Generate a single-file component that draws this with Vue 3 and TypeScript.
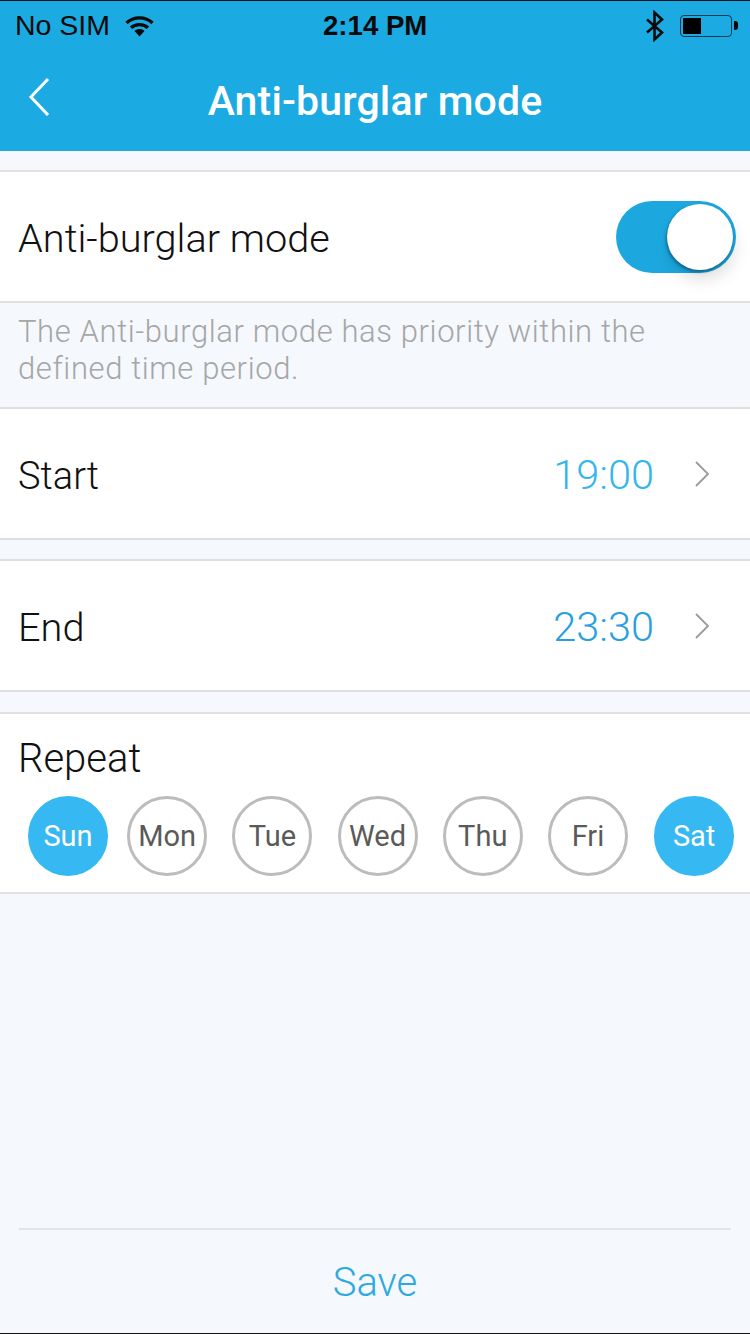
<script setup lang="ts">
interface Day {
  label: string;
  on: boolean;
}

const days: Day[] = [
  { label: 'Sun', on: true },
  { label: 'Mon', on: false },
  { label: 'Tue', on: false },
  { label: 'Wed', on: false },
  { label: 'Thu', on: false },
  { label: 'Fri', on: false },
  { label: 'Sat', on: true },
];
</script>

<template>
  <div class="page">
    <header class="top">
      <div class="status">
        <div class="status-left">
          <span>No SIM</span>
          <svg class="wifi" width="29" height="22" viewBox="0 0 29 22">
            <path d="M1.5 8C8.5 1.2 20.5 1.2 27.5 8" fill="none" stroke="#0a0a0a" stroke-width="3.4" />
            <path d="M6 12.8C10.5 8.6 18.5 8.6 23 12.8" fill="none" stroke="#0a0a0a" stroke-width="3.4" />
            <path d="M9.5 16 14.5 21.5 19.5 16C16.5 13.4 12.5 13.4 9.5 16Z" fill="#0a0a0a" />
          </svg>
        </div>
        <span class="clock">2:14 PM</span>
        <div class="status-right">
          <svg width="20" height="32" viewBox="0 0 20 32">
            <path d="M2 9.5 17 22.5 9.5 29.5V2.5L17 9.5 2 22.5" fill="none" stroke="#0a0a0a" stroke-width="2.6" />
          </svg>
          <div class="battery"><div class="battery-fill"></div></div>
        </div>
      </div>
      <div class="nav">
        <svg class="back" width="24" height="38" viewBox="0 0 24 38">
          <path d="M21 1 4 19 21 37" fill="none" stroke="#fff" stroke-width="3" />
        </svg>
        <h1>Anti-burglar mode</h1>
      </div>
    </header>

    <section class="row mode-row">
      <span class="label">Anti-burglar mode</span>
      <div class="switch"><div class="knob"></div></div>
    </section>
    <p class="note">The Anti-burglar mode has priority within the<br />defined time period.</p>

    <section class="row">
      <span class="label start-label">Start</span>
      <div class="value">
        <span class="time start-time">19:00</span>
        <svg width="16" height="26" viewBox="0 0 16 26"><path d="M2 1 14 13 2 25" fill="none" stroke="#9a9a9a" stroke-width="1.8" /></svg>
      </div>
    </section>
    <section class="row spaced">
      <span class="label">End</span>
      <div class="value">
        <span class="time">23:30</span>
        <svg width="16" height="26" viewBox="0 0 16 26"><path d="M2 1 14 13 2 25" fill="none" stroke="#9a9a9a" stroke-width="1.8" /></svg>
      </div>
    </section>

    <section class="repeat">
      <div class="repeat-title">Repeat</div>
      <div class="days">
        <div v-for="d in days" :key="d.label" class="day" :class="{ on: d.on }">{{ d.label }}</div>
      </div>
    </section>

    <footer class="foot">
      <div class="foot-inner">Save</div>
    </footer>
  </div>
</template>

<style scoped>
.page {
  width: 750px;
  height: 1334px;
  background: #f5f8fd;
  display: flex;
  flex-direction: column;
  font-family: Roboto, "Liberation Sans", sans-serif;
  font-weight: 300;
  color: #111;
  overflow: hidden;
}

.top {
  height: 151px;
  background: #1caae2;
  border-top: 1px solid #04141c;
  box-sizing: border-box;
  flex: none;
}

.status {
  height: 49px;
  padding: 0 13px 0 15px;
  display: flex;
  align-items: center;
  justify-content: space-between;
  font-family: "Liberation Sans", sans-serif;
  font-weight: 400;
  font-size: 28.5px;
  color: #0a0a0a;
  position: relative;
}

.status-left {
  display: flex;
  align-items: center;
  gap: 15px;
}

.clock {
  position: absolute;
  left: 323px;
  font-weight: 700;
  font-size: 27.6px;
}

.status-right {
  display: flex;
  align-items: center;
  gap: 15px;
}

.battery {
  width: 52px;
  height: 22px;
  border: 1.5px solid #0a3a50;
  border-radius: 4px;
  padding: 2px;
  box-sizing: border-box;
  position: relative;
  margin-right: 5px;
}

.battery::after {
  content: "";
  position: absolute;
  right: -7px;
  top: 5px;
  width: 4px;
  height: 9px;
  background: #0a0a0a;
  border-radius: 0 3px 3px 0;
}

.battery-fill {
  width: 18px;
  height: 100%;
  background: #000;
}

.nav {
  height: 101px;
  position: relative;
  display: flex;
  align-items: center;
  justify-content: center;
}

.nav h1 {
  margin: 0;
  font-size: 41px;
  font-weight: 500;
  letter-spacing: 0.15px;
  color: #fff;
}

.back {
  position: absolute;
  left: 27px;
  top: 28px;
}

.row {
  height: 133px;
  flex: none;
  box-sizing: border-box;
  background: #fff;
  border-top: 2px solid #e0e0e0;
  border-bottom: 2px solid #e0e0e0;
  padding: 0 19px;
  display: flex;
  align-items: center;
  justify-content: space-between;
  font-size: 40px;
}

.label {
  margin-left: -1px;
  padding-top: 4px;
  font-size: 39.7px;
}

.start-label {
  font-size: 38px;
}

.mode-row {
  margin-top: 19px;
  padding-right: 14px;
}

.spaced {
  margin-top: 19px;
}

.switch {
  width: 120px;
  height: 72px;
  border-radius: 36px;
  background: #1ca8df;
  position: relative;
}

.knob {
  position: absolute;
  right: 3px;
  top: 3px;
  width: 66px;
  height: 66px;
  border-radius: 50%;
  background: #fff;
  box-shadow: -1px 2px 3px rgba(0, 60, 90, 0.55), 2px 10px 16px rgba(0, 0, 0, 0.12);
}

.note {
  margin: 0;
  height: 104px;
  flex: none;
  box-sizing: border-box;
  padding: 10px 19px 0 18px;
  font-size: 31px;
  font-weight: 300;
  line-height: 37px;
  letter-spacing: 0.6px;
  color: #a6a6a6;
}

.value {
  display: flex;
  align-items: center;
  gap: 40px;
  padding-right: 21px;
}

.time {
  color: #2a9fe0;
  font-size: 41.5px;
  padding-top: 2px;
}

.start-time {
  color: #33b5ee;
}

.repeat {
  margin-top: 20px;
  height: 182px;
  flex: none;
  box-sizing: border-box;
  background: #fff;
  border-top: 2px solid #e0e0e0;
  border-bottom: 2px solid #e0e0e0;
  padding: 21px 0 0 18px;
}

.repeat-title {
  font-size: 40px;
  line-height: 48px;
}

.days {
  margin-top: 13px;
  padding-left: 10px;
  display: flex;
  gap: 25.2px;
}

.day {
  width: 80px;
  height: 80px;
  flex: none;
  box-sizing: border-box;
  border: 3px solid #bcbcbc;
  border-radius: 50%;
  display: flex;
  align-items: center;
  justify-content: center;
  font-size: 29px;
  font-weight: 400;
  color: #5a5a5a;
}

.day:first-child {
  margin-right: -6px;
}

.day:last-child {
  margin-left: 1px;
}

.day.on {
  background: #36b8f3;
  border-color: #36b8f3;
  color: #fff;
}

.foot {
  margin-top: auto;
  padding: 0 19px;
  height: 106px;
  flex: none;
  border-bottom: 1px solid #111;
  box-sizing: border-box;
}

.foot-inner {
  height: 100%;
  border-top: 2px solid #e2e4ea;
  display: flex;
  align-items: center;
  justify-content: center;
  color: #2ea9e0;
  font-size: 40px;
}
</style>
